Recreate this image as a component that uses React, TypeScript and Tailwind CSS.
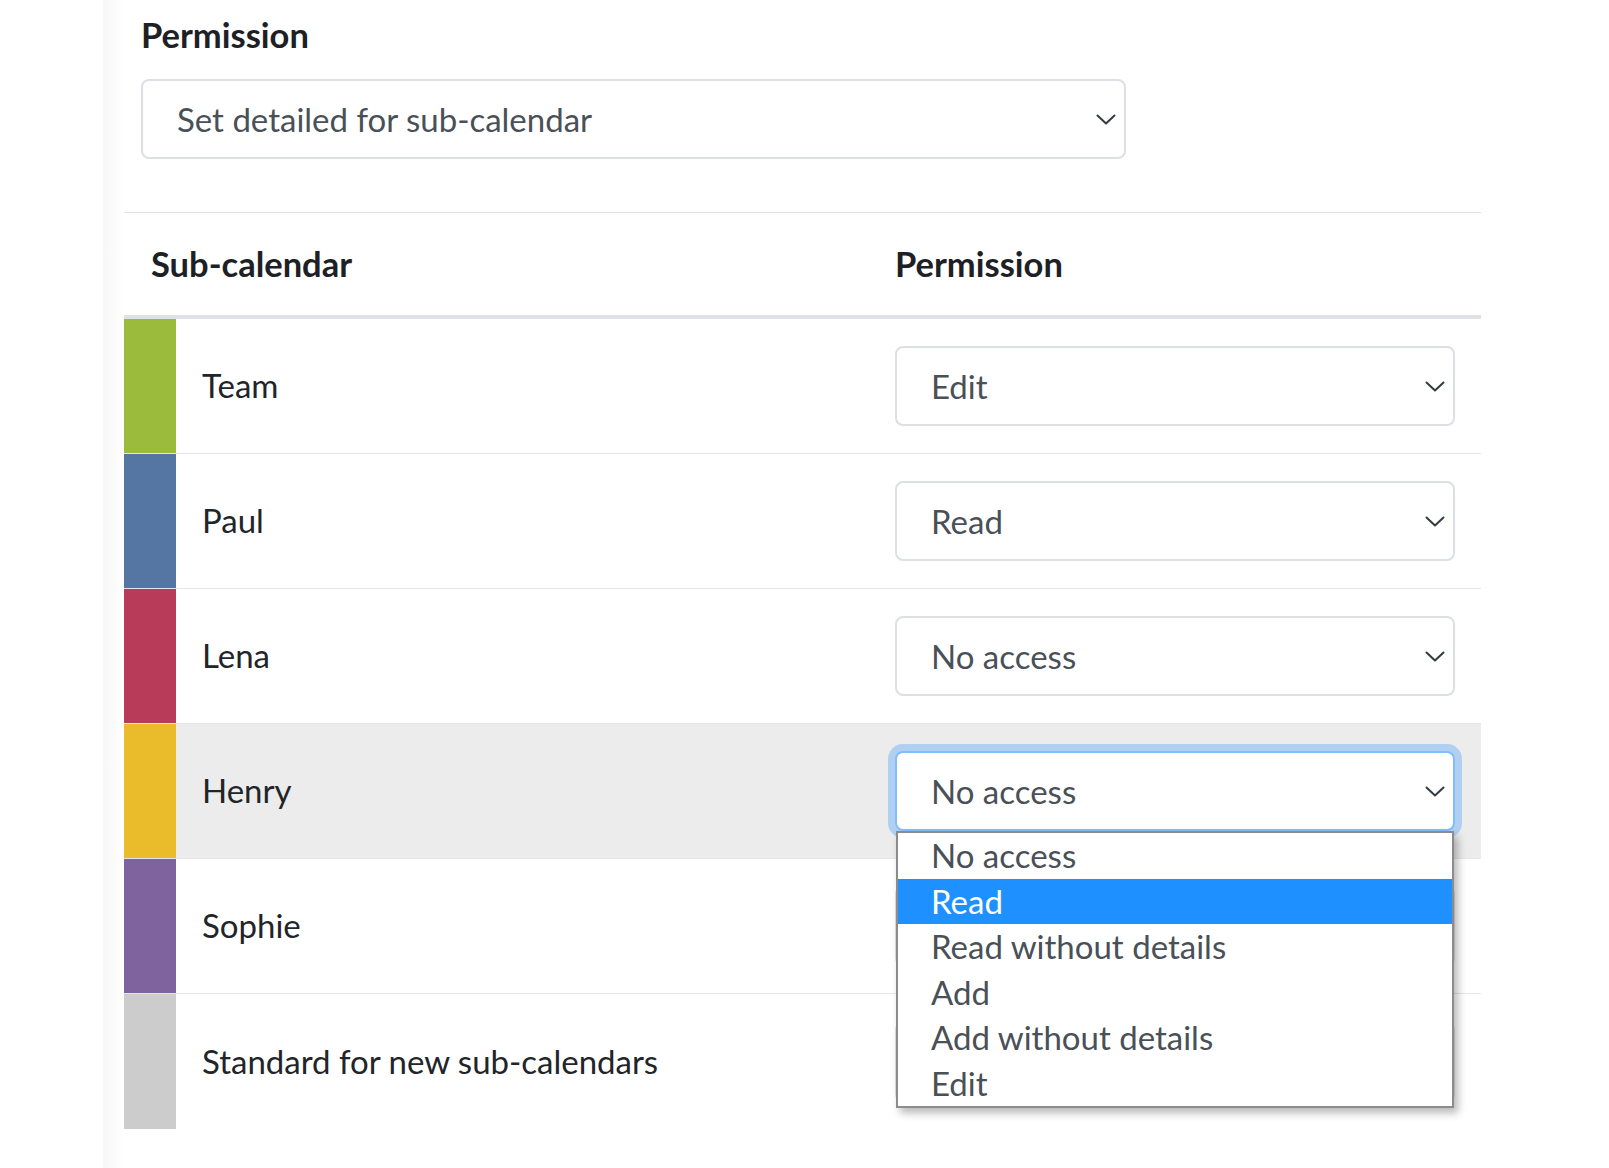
import React from "react";

const Chevron = () => (
  <svg width="20" height="11" viewBox="0 0 20 11" fill="none" className="shrink-0">
    <path d="M1.5 1.5 L10 9.5 L18.5 1.5" stroke="#343a40" strokeWidth="2" strokeLinecap="round" strokeLinejoin="round" />
  </svg>
);

type Row = { name: string; color: string; value: string; hover?: boolean; open?: boolean };

const rows: Row[] = [
  { name: "Team", color: "#9bbb3c", value: "Edit" },
  { name: "Paul", color: "#5575a3", value: "Read" },
  { name: "Lena", color: "#b83b5a", value: "No access" },
  { name: "Henry", color: "#eabc2c", value: "No access", hover: true, open: true },
  { name: "Sophie", color: "#7f639e", value: "Read" },
  { name: "Standard for new sub-calendars", color: "#cccccc", value: "No access" },
];

const options = ["No access", "Read", "Read without details", "Add", "Add without details", "Edit"];

function Select({ value, focused, width }: { value: string; focused?: boolean; width: string }) {
  return (
    <div
      className={
        "flex h-[80px] items-center justify-between rounded-[8px] border-2 bg-white pl-[34px] pr-[8px] text-[33px] text-[#495057] " +
        width +
        (focused ? " border-[#80bdff] shadow-[0_0_0_7px_rgba(0,123,255,0.25)]" : " border-[#dcdfe3]")
      }
    >
      <span className="leading-none">{value}</span>
      <Chevron />
    </div>
  );
}

export default function App() {
  return (
    <div className="flex h-[1168px] w-[1609px] overflow-hidden bg-white font-['Lato','Noto_Sans',sans-serif]">
      <div className="w-[103px] shrink-0" />
      <div className="w-[21px] shrink-0 bg-gradient-to-r from-[#f7f7f7] to-white" />
      <div className="w-[1357px] shrink-0">
        <div className="pl-[17px] pt-[11px]">
          <div className="h-[48px] text-[34.5px] font-bold leading-[48px] text-[#1d2125]">Permission</div>
          <div className="mt-[20px]">
            <Select value="Set detailed for sub-calendar" width="w-[985px]" />
          </div>
        </div>

        <div className="mt-[53px] flex h-[107px] border-t border-b-4 border-[#dee2e6] text-[34.5px] font-bold text-[#1d2125]">
          <div className="flex w-[745px] items-center pl-[27px]">Sub-calendar</div>
          <div className="flex flex-1 items-center pl-[26px]">Permission</div>
        </div>

        {rows.map((r, i) => (
          <div
            key={r.name}
            className={
              "flex h-[135px] " +
              (i < rows.length - 1 ? "border-b border-[#e3e6ea] " : "") +
              (r.hover ? "bg-[#ececec]" : "bg-white")
            }
          >
            <div className="w-[52px] shrink-0" style={{ backgroundColor: r.color }} />
            <div className="flex w-[693px] items-center pl-[26px] text-[33px] text-[#212529]">{r.name}</div>
            <div className="flex w-[612px] items-center px-[26px]">
              <div className="relative">
                <Select value={r.value} focused={r.open} width="w-[560px]" />
                {r.open && (
                  <div className="absolute left-[1px] top-[80px] z-10 w-[558px] border-2 border-[#8c8c8c] bg-white shadow-[4px_5px_8px_rgba(0,0,0,0.28)]">
                    {options.map((o) => (
                      <div
                        key={o}
                        className={
                          "flex h-[45.5px] items-center pl-[33px] text-[33px] leading-none " +
                          (o === "Read" ? "bg-[#1e90ff] text-white" : "text-[#495057]")
                        }
                      >
                        {o}
                      </div>
                    ))}
                  </div>
                )}
              </div>
            </div>
          </div>
        ))}
      </div>
    </div>
  );
}
